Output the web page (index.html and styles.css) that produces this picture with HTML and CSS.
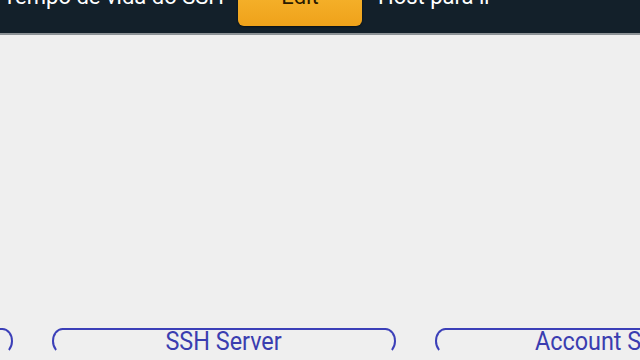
FILE: index.html
```html
<!DOCTYPE html>
<html>
<head>
<meta charset="utf-8">
<link rel="stylesheet" href="styles.css">
</head>
<body>
<header class="topbar">
  <div class="toprow">
    <span class="label label-left">Tempo de vida do SSH</span>
    <button class="edit">Edit</button>
    <span class="label label-right">Host para ir</span>
  </div>
</header>
<main class="content">
  <div class="tabs">
    <div class="tab tab-first"></div>
    <div class="tab tab-ssh"><span>SSH Server</span></div>
    <div class="tab tab-account"><span>Account Settings</span></div>
  </div>
</main>
</body>
</html>
```
FILE: styles.css
```css
html, body {
  margin: 0;
  padding: 0;
  width: 640px;
  height: 360px;
  overflow: hidden;
  background: #efefef;
  font-family: Roboto, "Liberation Sans", sans-serif;
}
.topbar {
  height: 33px;
  background: #13202a;
  border-bottom: 2px solid #8c9296;
  overflow: hidden;
}
.toprow {
  display: flex;
  align-items: flex-start;
  margin-top: -16px;
}
.label {
  color: #ffffff;
  font-size: 22px;
  line-height: 26px;
}
.label-left {
  margin-left: 3px;
  width: 235px;
}
.edit {
  flex: none;
  width: 124px;
  height: 42px;
  border: none;
  border-radius: 6px;
  background: linear-gradient(#f7b731, #efa21a);
  box-shadow: 0 1px 2px rgba(0,0,0,0.5);
  color: #2a1a00;
  font-family: Roboto, "Liberation Sans", sans-serif;
  font-size: 22px;
  line-height: 26px;
  padding: 0;
  display: flex;
  justify-content: center;
  align-items: flex-start;
}
.label-right {
  margin-left: 16px;
}
.content {
  height: 325px;
  display: flex;
  flex-direction: column;
  justify-content: flex-end;
  background: #efefef;
}
.tabs {
  display: flex;
  gap: 39px;
  margin-left: -331px;
  height: 32px;
}
.tab {
  flex: none;
  width: 340px;
  height: 22px;
  border: 2px solid #3b3fb8;
  border-bottom-color: transparent;
  border-radius: 13px / 16px;
  display: flex;
  justify-content: center;
  align-items: flex-start;
  color: #3a3db0;
  font-size: 26px;
  line-height: 23px;
}
.tab span {
  display: block;
  white-space: nowrap;
  transform: scaleX(0.9);
}
.tab-account span {
  margin-left: 34px;
}
```
